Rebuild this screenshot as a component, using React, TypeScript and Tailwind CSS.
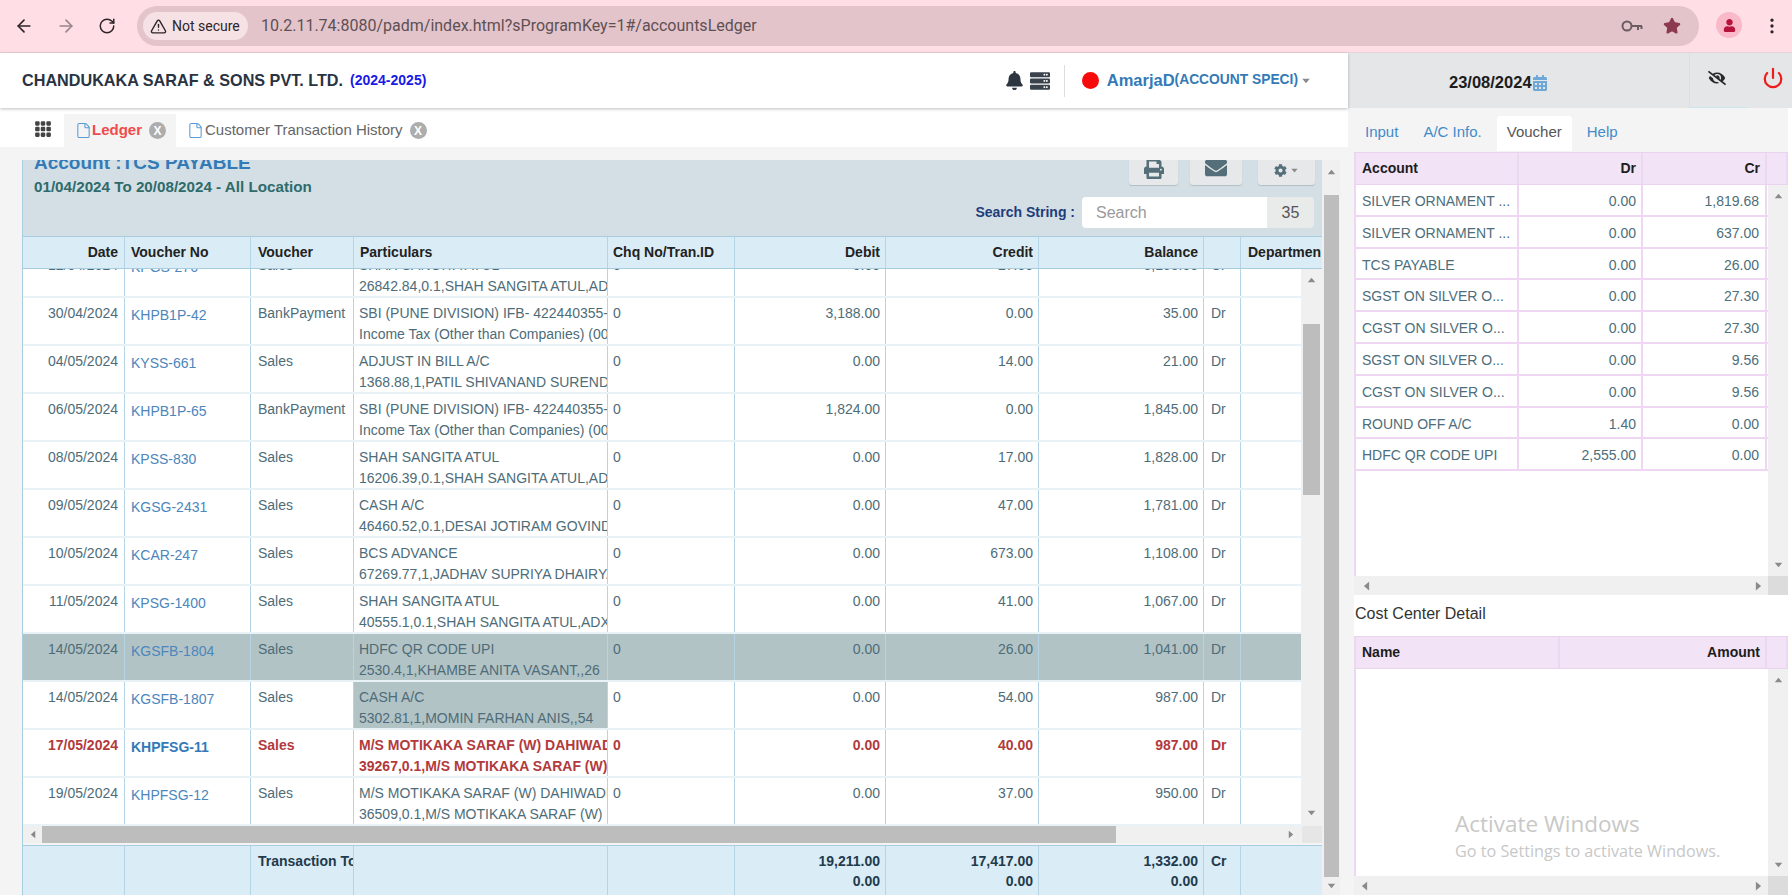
import { ArrowLeft, ArrowRight, File, MoreVertical, Power, RotateCw, Star, TriangleAlert } from "lucide-react";
import { BsGrid3X3GapFill } from "react-icons/bs";
import { FaBell, FaCalendarAlt, FaCog, FaEnvelope, FaEyeSlash, FaPrint, FaServer, FaUser } from "react-icons/fa";

type Row = {
  date: string;
  no: string;
  type: string;
  line1: string;
  line2: string;
  debit: string;
  credit: string;
  balance: string;
  side: string;
  state?: "selected" | "cell" | "red";
};

const rows: Row[] = [
  { date: "12/04/2024", no: "KPGS-276", type: "Sales", line1: "SHAH SANGITA ATUL", line2: "26842.84,0.1,SHAH SANGITA ATUL,ADX", debit: "0.00", credit: "27.00", balance: "3,153.00", side: "Cr" },
  { date: "30/04/2024", no: "KHPB1P-42", type: "BankPayment", line1: "SBI (PUNE DIVISION) IFB- 422440355-", line2: "Income Tax (Other than Companies) (0021)", debit: "3,188.00", credit: "0.00", balance: "35.00", side: "Dr" },
  { date: "04/05/2024", no: "KYSS-661", type: "Sales", line1: "ADJUST IN BILL A/C", line2: "1368.88,1,PATIL SHIVANAND SURENDRA", debit: "0.00", credit: "14.00", balance: "21.00", side: "Dr" },
  { date: "06/05/2024", no: "KHPB1P-65", type: "BankPayment", line1: "SBI (PUNE DIVISION) IFB- 422440355-", line2: "Income Tax (Other than Companies) (0021)", debit: "1,824.00", credit: "0.00", balance: "1,845.00", side: "Dr" },
  { date: "08/05/2024", no: "KPSS-830", type: "Sales", line1: "SHAH SANGITA ATUL", line2: "16206.39,0.1,SHAH SANGITA ATUL,ADX", debit: "0.00", credit: "17.00", balance: "1,828.00", side: "Dr" },
  { date: "09/05/2024", no: "KGSG-2431", type: "Sales", line1: "CASH A/C", line2: "46460.52,0.1,DESAI JOTIRAM GOVINDA", debit: "0.00", credit: "47.00", balance: "1,781.00", side: "Dr" },
  { date: "10/05/2024", no: "KCAR-247", type: "Sales", line1: "BCS ADVANCE", line2: "67269.77,1,JADHAV SUPRIYA DHAIRYA", debit: "0.00", credit: "673.00", balance: "1,108.00", side: "Dr" },
  { date: "11/05/2024", no: "KPSG-1400", type: "Sales", line1: "SHAH SANGITA ATUL", line2: "40555.1,0.1,SHAH SANGITA ATUL,ADX", debit: "0.00", credit: "41.00", balance: "1,067.00", side: "Dr" },
  { date: "14/05/2024", no: "KGSFB-1804", type: "Sales", line1: "HDFC QR CODE UPI", line2: "2530.4,1,KHAMBE ANITA VASANT,,26", debit: "0.00", credit: "26.00", balance: "1,041.00", side: "Dr", state: "selected" },
  { date: "14/05/2024", no: "KGSFB-1807", type: "Sales", line1: "CASH A/C", line2: "5302.81,1,MOMIN FARHAN ANIS,,54", debit: "0.00", credit: "54.00", balance: "987.00", side: "Dr", state: "cell" },
  { date: "17/05/2024", no: "KHPFSG-11", type: "Sales", line1: "M/S MOTIKAKA SARAF (W) DAHIWADI", line2: "39267,0.1,M/S MOTIKAKA SARAF (W)", debit: "0.00", credit: "40.00", balance: "987.00", side: "Dr", state: "red" },
  { date: "19/05/2024", no: "KHPFSG-12", type: "Sales", line1: "M/S MOTIKAKA SARAF (W) DAHIWADI", line2: "36509,0.1,M/S MOTIKAKA SARAF (W)", debit: "0.00", credit: "37.00", balance: "950.00", side: "Dr" },
];

const vouchers = [
  ["SILVER ORNAMENT ...", "0.00", "1,819.68"],
  ["SILVER ORNAMENT ...", "0.00", "637.00"],
  ["TCS PAYABLE", "0.00", "26.00"],
  ["SGST ON SILVER O...", "0.00", "27.30"],
  ["CGST ON SILVER O...", "0.00", "27.30"],
  ["SGST ON SILVER O...", "0.00", "9.56"],
  ["CGST ON SILVER O...", "0.00", "9.56"],
  ["ROUND OFF A/C", "1.40", "0.00"],
  ["HDFC QR CODE UPI", "2,555.00", "0.00"],
];

const ledgerCols = "grid-cols-[102px_126px_103px_254px_127px_151px_153px_165px_37px_59px]";
const ledgerHeadCols = "grid-cols-[102px_126px_103px_254px_127px_151px_153px_165px_37px_80px]";
const cell = "overflow-hidden whitespace-nowrap border-r border-[#b5d4e5] px-[5px]";

function Arrow({ dir, className }: { dir: "up" | "down" | "left" | "right"; className?: string }) {
  const points = {
    up: "0,7 5,1 10,7",
    down: "0,1 5,7 10,1",
    left: "7,0 1,5 7,10",
    right: "1,0 7,5 1,10",
  }[dir];
  return (
    <svg viewBox={dir === "up" || dir === "down" ? "0 0 10 8" : "0 0 8 10"} className={className} fill="#8a8a8a">
      <polygon points={points} />
    </svg>
  );
}

function CloseDot() {
  return (
    <span className="ml-[7px] flex size-[17px] items-center justify-center rounded-full bg-[#adadad] text-[12px] font-bold text-white">
      X
    </span>
  );
}

function SideScroll({ end }: { end?: boolean }) {
  return (
    <div className="flex h-[19px] items-center bg-[#f0f0f0]">
      <Arrow dir="left" className="ml-[7px] h-[10px] w-[7px]" />
      <Arrow dir="right" className="ml-auto mr-[6px] h-[10px] w-[7px]" />
      {end && <div className="h-full w-[20px] bg-[#dcdcdc]" />}
    </div>
  );
}

function LedgerRow({ row }: { row: Row }) {
  const red = row.state === "red";
  const text = red ? "font-bold text-[#b23a3c]" : "text-[#4e6c78]";
  return (
    <div
      className={`grid h-[48px] border-b-2 border-[#e9f2f7] text-[14px] leading-[21px] ${ledgerCols} ${
        row.state === "selected" ? "bg-[#b2c3c6]" : "bg-white"
      } ${text}`}
    >
      <div className={`${cell} pt-[5px] pr-[6px] text-right`}>{row.date}</div>
      <div className={`${cell} pl-[6px] pt-[7px] ${red ? "text-[#337ab7]" : "text-[#4c86bd]"}`}>{row.no}</div>
      <div className={`${cell} pl-[7px] pt-[5px]`}>{row.type}</div>
      <div className={`${cell} pt-[5px] ${row.state === "cell" ? "bg-[#b2c3c6]" : ""}`}>
        <div>{row.line1}</div>
        <div>{row.line2}</div>
      </div>
      <div className={`${cell} pt-[5px]`}>0</div>
      <div className={`${cell} pt-[5px] text-right`}>{row.debit}</div>
      <div className={`${cell} pt-[5px] text-right`}>{row.credit}</div>
      <div className={`${cell} pt-[5px] text-right`}>{row.balance}</div>
      <div className={`${cell} pl-[7px] pt-[5px]`}>{row.side}</div>
      <div className="pt-[5px]" />
    </div>
  );
}

function PurpleHead({ cols, labels }: { cols: string; labels: string[] }) {
  return (
    <div className={`grid h-[33px] border-y border-[#e9d3ee] bg-[#f2e3f6] text-[14px] font-bold leading-[31px] text-[#1d1d1d] ${cols}`}>
      {labels.map((l, i) => (
        <div key={i} className={`border-r-2 border-[#ecd8f0] ${i === 0 ? "border-l-2 px-[6px]" : "px-[5px] text-right"}`}>
          {l}
        </div>
      ))}
      <div className="border-r-2 border-[#ecd8f0]" />
    </div>
  );
}

function SideBar() {
  return (
    <div className="flex w-[20px] flex-col items-center justify-between bg-[#f0f0f0] py-[8px]">
      <Arrow dir="up" className="h-[6px] w-[9px]" />
      <Arrow dir="down" className="h-[6px] w-[9px]" />
    </div>
  );
}

export default function App() {
  return (
    <div className="flex h-[895px] w-[1792px] flex-col overflow-hidden bg-white font-['Liberation_Sans',Arial,sans-serif]">
      {/* browser bar */}
      <div className="flex h-[53px] items-center border-b border-[#ebd0d6] bg-[#ffdfe5] font-['Roboto',sans-serif]">
        <ArrowLeft className="ml-[14px] size-[20px] text-[#2e2528]" />
        <ArrowRight className="ml-[22px] size-[20px] text-[#98868b]" />
        <RotateCw className="ml-[22px] size-[18px] text-[#2e2528]" />
        <div className="ml-[21px] flex h-[40px] flex-1 items-center rounded-full bg-[#e3c4ca] pl-[6px] pr-[18px]">
          <div className="flex h-[28px] w-[105px] items-center rounded-full bg-[#f6e1e5] pl-[7px] text-[14px] text-[#2e2528]">
            <TriangleAlert className="mr-[5px] size-[17px]" />
            Not secure
          </div>
          <span className="ml-[13px] text-[16px] text-[#5e5054]">10.2.11.74:8080/padm/index.html?sProgramKey=1#/accountsLedger</span>
          <svg viewBox="0 0 22 14" className="ml-auto h-[14px] w-[22px]" fill="none" stroke="#6b5c60" strokeWidth="2">
            <circle cx="6" cy="7" r="4.5" />
            <path d="M10.5 7H21M17 7v4M20.5 7v3" />
          </svg>
          <Star className="ml-[20px] size-[18px] fill-[#8c3a50] text-[#8c3a50]" />
        </div>
        <div className="ml-[17px] mb-[2px] flex size-[26px] items-center justify-center rounded-full bg-[#f9b9c8]">
          <FaUser className="size-[13px] text-[#b5123c]" />
        </div>
        <MoreVertical className="ml-[20px] mr-[10px] size-[20px] text-[#2e2528]" />
      </div>

      <div className="flex min-h-0 flex-1">
        {/* left column */}
        <div className="flex w-[1348px] flex-col">
          <div className="z-10 flex h-[55px] items-center bg-white pl-[22px] shadow-[0_1px_3px_rgba(0,0,0,0.25)]">
            <span className="text-[16.2px] font-bold text-[#2a3342]">CHANDUKAKA SARAF &amp; SONS PVT. LTD.</span>
            <span className="ml-[7px] text-[14px] font-bold text-[#1a1ae6]">(2024-2025)</span>
            <FaBell className="ml-auto size-[19px] text-[#2c3540]" />
            <FaServer className="ml-[6px] size-[20px] text-[#3a424c]" />
            <div className="ml-[14px] h-[32px] w-px bg-[#dddddd]" />
            <span className="ml-[17px] size-[17px] rounded-full bg-[#f60a0a]" />
            <span className="ml-[8px] text-[16.5px] font-bold text-[#337ab7]">AmarjaD</span>
            <span className="text-[13.8px] font-bold text-[#337ab7]">(ACCOUNT SPECI)</span>
            <Arrow dir="down" className="ml-[3px] mr-[37px] h-[6px] w-[10px]" />
          </div>

          <div className="flex h-[39px] bg-white pl-[22px]">
            <div className="flex w-[42px] items-center justify-center pt-[2px]">
              <BsGrid3X3GapFill className="size-[18px] text-[#444444]" />
            </div>
            <div className="mt-[6px] flex w-[112px] items-center bg-[#f4f4f4] pl-[11px] text-[15px]">
              <File className="size-[17px] text-[#5b9bd5]" strokeWidth={1.5} />
              <span className="font-bold text-[#f04b4b]">Ledger</span>
              <CloseDot />
            </div>
            <div className="mt-[6px] flex items-center pl-[11px] text-[15px] text-[#666666]">
              <File className="size-[17px] text-[#5b9bd5]" strokeWidth={1.5} />
              <span className="ml-[1px]">Customer Transaction History</span>
              <CloseDot />
            </div>
          </div>

          <div className="flex min-h-0 flex-1 bg-[#f4f4f4] pl-[22px] pr-[8px] pt-[13px]">
            <div className="flex w-[1300px] flex-col overflow-hidden border-l border-[#a9cde0]">
              {/* account head */}
              <div className="flex h-[76px] bg-[#d3dfe5] pl-[11px] pr-[7px]">
                <div>
                  <div className="-mt-[9px] text-[19px] font-bold leading-[24px] text-[#337ab7]">Account :TCS PAYABLE</div>
                  <div className="mt-[2px] text-[15.2px] font-bold leading-[20px] text-[#2f6b6b]">01/04/2024 To 20/08/2024 - All Location</div>
                </div>
                <div className="ml-auto flex flex-col items-end">
                  <div className="flex h-[25px] gap-[12px]">
                    <div className="flex w-[49px] items-end justify-center rounded-b-[3px] bg-[#e6e8e9] pb-[6px] shadow-[0_1px_1px_rgba(0,0,0,0.15)]">
                      <FaPrint className="size-[20px] text-[#546e7a]" />
                    </div>
                    <div className="flex w-[52px] items-end justify-center rounded-b-[3px] bg-[#e6e8e9] pb-[6px] shadow-[0_1px_1px_rgba(0,0,0,0.15)]">
                      <FaEnvelope className="size-[22px] text-[#546e7a]" />
                    </div>
                    <div className="ml-[4px] flex w-[57px] items-center justify-center gap-[3px] rounded-b-[3px] bg-[#e6e8e9] pb-[5px] shadow-[0_1px_1px_rgba(0,0,0,0.15)]">
                      <FaCog className="size-[13px] text-[#546e7a]" />
                      <Arrow dir="down" className="h-[5px] w-[9px]" />
                    </div>
                  </div>
                  <div className="mr-[1px] mt-[12px] flex h-[31px] items-center">
                    <span className="mr-[7px] text-[14px] font-bold text-[#1f3c7a]">Search String :</span>
                    <input
                      readOnly
                      placeholder="Search"
                      className="h-full w-[185px] rounded-l-[4px] bg-white pl-[14px] text-[16px] outline-none placeholder:text-[#9a9a9a]"
                    />
                    <div className="flex h-full w-[47px] items-center justify-center rounded-r-[4px] bg-[#e9eaea] text-[16px] text-[#555555]">35</div>
                  </div>
                </div>
              </div>

              {/* grid head */}
              <div className={`grid h-[33px] shrink-0 border-y border-[#a9cde0] bg-[#daecf5] text-[14px] font-bold leading-[31px] text-[#222222] ${ledgerHeadCols}`}>
                <div className={`${cell} pr-[6px] text-right`}>Date</div>
                <div className={`${cell} pl-[6px]`}>Voucher No</div>
                <div className={`${cell} pl-[7px]`}>Voucher</div>
                <div className={`${cell} pl-[6px]`}>Particulars</div>
                <div className={cell}>Chq No/Tran.ID</div>
                <div className={`${cell} text-right`}>Debit</div>
                <div className={`${cell} text-right`}>Credit</div>
                <div className={`${cell} text-right`}>Balance</div>
                <div className={cell} />
                <div className="overflow-hidden whitespace-nowrap pl-[7px]">Department</div>
              </div>

              {/* grid body */}
              <div className="flex h-[557px] shrink-0">
                <div className="w-[1278px] overflow-hidden">
                  <div className="-mt-[19px]">
                    {rows.map((r) => (
                      <LedgerRow key={r.no} row={r} />
                    ))}
                  </div>
                </div>
                <div className="flex w-[20px] flex-col items-center bg-[#f0f0f0]">
                  <Arrow dir="up" className="mt-[8px] h-[6px] w-[9px]" />
                  <div className="mt-[41px] h-[171px] w-[17px] bg-[#bdbdbd]" />
                  <Arrow dir="down" className="mb-[10px] mt-auto h-[6px] w-[9px]" />
                </div>
              </div>
              <div className="flex h-[17px] shrink-0 items-center bg-[#f0f0f0]">
                <Arrow dir="left" className="ml-[7px] h-[9px] w-[6px]" />
                <div className="ml-[6px] h-full w-[1074px] bg-[#bdbdbd]" />
                <Arrow dir="right" className="ml-[172px] h-[9px] w-[6px]" />
                <div className="ml-auto h-full w-[20px] bg-[#e6e6e6]" />
              </div>

              {/* totals */}
              <div className={`mt-[2px] grid flex-1 border-t border-[#a9cde0] bg-[#daecf5] text-[14px] font-bold leading-[20px] text-[#1f3b4d] ${ledgerHeadCols}`}>
                <div className="border-r border-[#b5d4e5]" />
                <div className="border-r border-[#b5d4e5]" />
                <div className={`${cell} pl-[7px] pr-0 pt-[5px]`}>Transaction Total</div>
                <div className="border-r border-[#b5d4e5]" />
                <div className="border-r border-[#b5d4e5]" />
                <div className={`${cell} pt-[5px] text-right`}>19,211.00<br />0.00</div>
                <div className={`${cell} pt-[5px] text-right`}>17,417.00<br />0.00</div>
                <div className={`${cell} pt-[5px] text-right`}>1,332.00<br />0.00</div>
                <div className={`${cell} pl-[7px] pt-[5px]`}>Cr</div>
                <div />
              </div>
            </div>
            {/* outer scrollbar */}
            <div className="flex w-[18px] flex-col items-center bg-[#f0f0f0]">
              <Arrow dir="up" className="mt-[9px] h-[6px] w-[9px]" />
              <div className="mt-[20px] h-[682px] w-[15px] bg-[#bdbdbd]" />
              <Arrow dir="down" className="mt-auto mb-[6px] h-[6px] w-[9px]" />
            </div>
          </div>
        </div>

        {/* right column */}
        <div className="flex w-[444px] flex-col">
          <div className="flex h-[55px] items-center bg-[#e4e6e8]">
            <div className="flex w-[341px] items-center pl-[101px] pt-[4px]">
              <span className="text-[16.5px] font-bold text-[#1c1c1c]">23/08/2024</span>
              <FaCalendarAlt className="size-[16px] text-[#6fa8d6]" />
            </div>
            <div className="flex h-full w-[58px] items-center justify-center border-b border-l border-[#cde3f0] pb-[5px] pr-[4px]">
              <FaEyeSlash className="size-[18px] text-[#2a2a2a]" />
            </div>
            <Power className="mb-[6px] ml-[15px] size-[22px] text-[#ee1c1c]" strokeWidth={2.4} />
          </div>

          <div className="flex min-h-0 flex-1 bg-white">
            <div className="w-[6px] bg-[#f4f4f4]" />
            <div className="flex w-[434px] flex-col">
              <div className="flex h-[44px] shrink-0 items-end bg-[#f4f4f4] pb-[1px] pl-[11px] text-[15px] text-[#428bca]">
                <div className="pb-[8px]">Input</div>
                <div className="ml-[25px] pb-[8px]">A/C Info.</div>
                <div className="ml-[15px] flex h-[35px] w-[75px] items-center justify-center rounded-t-[4px] bg-white pb-[2px] text-[#555555]">Voucher</div>
                <div className="ml-[15px] pb-[8px]">Help</div>
              </div>

              <PurpleHead cols="grid-cols-[165px_124px_124px_21px]" labels={["Account", "Dr", "Cr"]} />
              <div className="flex h-[391px] shrink-0">
                <div className="flex-1 border-l-2 border-[#ecd8f0]">
                  {vouchers.map(([name, dr, cr], i) => (
                    <div key={i} className="grid h-[31.8px] grid-cols-[163px_124px_124px] border-b-2 border-[#efd6f3] text-[14px] leading-[32px] text-[#4d6e7a]">
                      <div className="overflow-hidden whitespace-nowrap border-r-2 border-[#efd6f3] px-[6px]">{name}</div>
                      <div className="border-r-2 border-[#efd6f3] px-[5px] text-right">{dr}</div>
                      <div className="border-r-2 border-[#efd6f3] px-[6px] text-right">{cr}</div>
                    </div>
                  ))}
                </div>
                <SideBar />
              </div>
              <div className="shrink-0 border-l-2 border-[#f0f0f0]">
                <SideScroll end />
              </div>
              <div className="flex h-[41px] shrink-0 items-center pb-[4px] pl-[1px] text-[16px] text-[#333333]">Cost Center Detail</div>
              <PurpleHead cols="grid-cols-[206px_207px_21px]" labels={["Name", "Amount"]} />
              <div className="flex h-[207px] shrink-0">
                <div className="flex-1 border-l-2 border-[#ecd8f0]" />
                <SideBar />
              </div>
              <div className="shrink-0">
                <SideScroll end />
              </div>
            </div>
          </div>
        </div>
      </div>

      {/* windows watermark */}
      <div className="pointer-events-none absolute left-[1455px] top-[808px] font-['Open_Sans',sans-serif] text-[#c8c8c8]">
        <div className="text-[22.5px] leading-[31px]">Activate Windows</div>
        <div className="text-[16.2px] leading-[24px]">Go to Settings to activate Windows.</div>
      </div>
    </div>
  );
}
